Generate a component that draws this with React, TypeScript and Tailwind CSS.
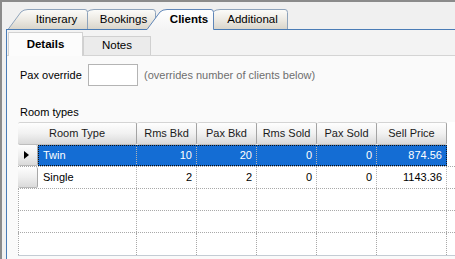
const cols = [
  { label: 'Rms Bkd', w: 'w-[60px]' },
  { label: 'Pax Bkd', w: 'w-[60px]' },
  { label: 'Rms Sold', w: 'w-[60px]' },
  { label: 'Pax Sold', w: 'w-[60px]' },
  { label: 'Sell Price', w: 'w-[70px]' },
]

const rows = [
  { type: 'Twin', vals: ['10', '20', '0', '0', '874.56'] },
  { type: 'Single', vals: ['2', '2', '0', '0', '1143.36'] },
]

function tabPath(sx: number, tx: number, rx: number) {
  return `M${sx} 29.5 L${tx - 5} 12 Q${tx - 2.5} 9.5 ${tx + 2} 9.5 L${rx - 3} 9.5 Q${rx - 0.5} 9.5 ${rx - 0.5} 12.5 L${rx - 0.5} 29.5`
}

function TabShapes() {
  const back = [
    [198, 218, 288],
    [72, 92, 156],
    [8, 26, 88],
  ]
  return (
    <svg className="absolute left-0 top-0" width="453" height="28" viewBox="2 2 453 28">
      <defs>
        <linearGradient id="tabg" x1="0" y1="0" x2="0" y2="1">
          <stop offset="0" stopColor="#fcfcfa" />
          <stop offset="0.55" stopColor="#ebe8e1" />
          <stop offset="1" stopColor="#d8d4ca" />
        </linearGradient>
        <linearGradient id="tabs" x1="0" y1="0" x2="0" y2="1">
          <stop offset="0" stopColor="#ffffff" />
          <stop offset="1" stopColor="#f3f3f3" />
        </linearGradient>
      </defs>
      {back.map(([sx, tx, rx]) => (
        <path key={sx} d={tabPath(sx, tx, rx) + ' Z'} fill="url(#tabg)" stroke="#8ea3bb" strokeWidth="1" />
      ))}
      <line x1="6" y1="29.5" x2="455" y2="29.5" stroke="#4a7cb6" strokeWidth="1" />
      <path d={tabPath(147, 165, 214) + ' L213.5 30.5 L147 30.5 Z'} fill="url(#tabs)" />
      <path d={tabPath(147, 165, 214)} fill="none" stroke="#5f86b8" strokeWidth="1" />
    </svg>
  )
}

function HeaderCell({ label, w }: { label: string; w: string }) {
  return (
    <div
      className={`${w} flex h-full shrink-0 items-center justify-center rounded-[2px] border-r border-b border-t border-r-[#a3a3a3] border-b-[#bdbdbd] border-t-[#d4d4d4] bg-gradient-to-b from-[#fefefe] via-[#f1f1f1] to-[#d9d9d9] text-[#1a1a1a]`}
    >
      {label}
    </div>
  )
}

function RowHeader({ current }: { current?: boolean }) {
  return (
    <div className="flex h-full w-[20px] shrink-0 items-center rounded-[2px] border-r border-b border-r-[#a8a8a8] border-b-[#b8b8b8] bg-gradient-to-b from-[#fefefe] via-[#efefef] to-[#dadada] pl-[6px]">
      {current && <div className="h-0 w-0 border-y-[4px] border-l-[5px] border-y-transparent border-l-black" />}
    </div>
  )
}

export default function App() {
  return (
    <div className="h-[259px] w-[455px] overflow-hidden border-t-2 border-l-2 border-[#8b8b8b] bg-[#f0f0f0] font-['Liberation_Sans',Arial,sans-serif] text-[11px] text-black">
      <div className="relative h-[28px]">
        <TabShapes />
        <div className="relative flex pl-[24px] pt-[7px] text-[11.5px]">
          <div className="h-[21px] w-[61px] text-center leading-[21px]">Itinerary</div>
          <div className="ml-[5px] h-[21px] w-[63px] text-center leading-[21px]">Bookings</div>
          <div className="ml-[10px] h-[21px] w-[48px] text-center font-bold leading-[21px]">Clients</div>
          <div className="ml-[5px] h-[21px] w-[69px] text-center leading-[21px]">Additional</div>
        </div>
      </div>

      <div className="ml-[4px] flex h-[229px] flex-col border-l border-[#4a7cb6] bg-[#f3f3f3]">
        <div className="flex h-[26px] shrink-0 items-end border-b border-[#d4d4d4] pl-[1px] text-[11.5px]">
          <div className="-mb-px flex h-[24px] w-[75px] items-center justify-center border-x border-t border-[#d2d2d2] bg-[#fcfcfc] font-bold">
            Details
          </div>
          <div className="flex h-[19px] w-[68px] items-center justify-center border-x border-t border-[#d0d0d0] bg-[#ebebeb]">
            Notes
          </div>
        </div>

        <div className="flex-1 bg-[#fafafa] pl-[13px] pt-[8px]">
          <div className="flex h-[22px] items-center">
            <div className="w-[68px]">Pax override</div>
            <div className="h-[22px] w-[50px] border border-[#b4b4b4] bg-white" />
            <div className="ml-[6px] text-[#6e6e6e]">(overrides number of clients below)</div>
          </div>

          <div className="mt-[19px] h-[14px] leading-[14px]">Room types</div>

          <div className="-ml-[2px] mt-[3px] w-[437px] border-b border-[#c4ccd4] bg-white">
            <div className="flex h-[23px]">
              <HeaderCell label="Room Type" w="w-[119px]" />
              {cols.map((c) => (
                <HeaderCell key={c.label} label={c.label} w={c.w} />
              ))}
            </div>

            {rows.map((r, i) => (
              <div key={r.type} className="flex h-[22px] border-b border-dotted border-[#a9a9a9]">
                <RowHeader current={i === 0} />
                <div
                  className={`flex ${i === 0 ? 'bg-[#146dd4] text-white outline-1 -outline-offset-1 outline-dotted outline-[#111]' : ''}`}
                >
                  <div className="flex w-[99px] items-center border-r border-dotted border-[#b4b4b4] pl-[5px]">
                    {r.type}
                  </div>
                  {r.vals.map((v, j) => (
                    <div
                      key={j}
                      className={`${cols[j].w} flex items-center justify-end border-r border-dotted border-[#b4b4b4] pr-[4px]`}
                    >
                      {v}
                    </div>
                  ))}
                </div>
              </div>
            ))}

            {[0, 1, 2].map((k) => (
              <div key={k} className="flex h-[22px] border-b border-dotted border-[#a9a9a9] last:border-b-0">
                <div className="w-[119px] border-x border-dotted border-[#a9a9a9]" />
                {cols.map((c) => (
                  <div key={c.label} className={`${c.w} border-r border-dotted border-[#a9a9a9]`} />
                ))}
              </div>
            ))}
          </div>
        </div>
      </div>
    </div>
  )
}
